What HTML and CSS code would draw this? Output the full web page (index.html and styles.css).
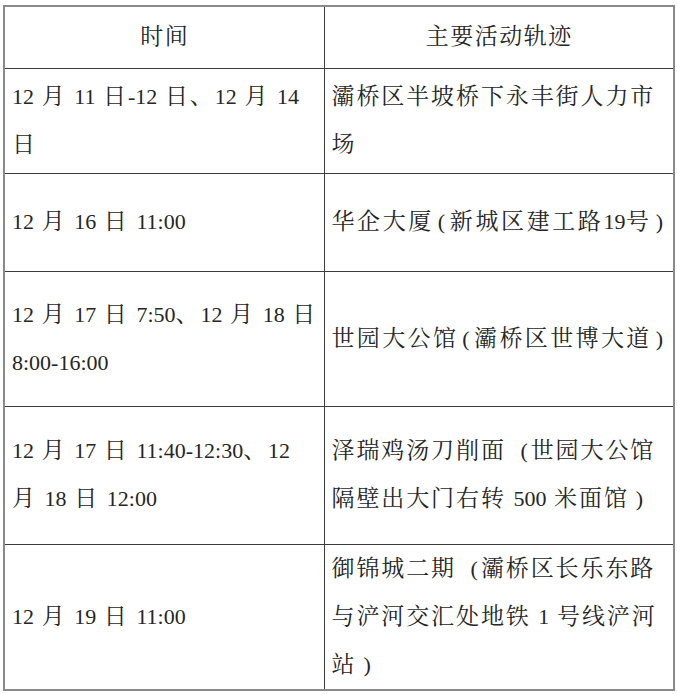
FILE: index.html
```html
<!DOCTYPE html>
<html lang="zh-CN">
<head>
<meta charset="utf-8">
<title>活动轨迹</title>
<link rel="stylesheet" href="styles.css">
</head>
<body>
<table class="track">
  <colgroup><col class="c-time"><col class="c-place"></colgroup>
  <tr class="r-head">
    <th>时间</th>
    <th>主要活动轨迹</th>
  </tr>
  <tr class="r1">
    <td><span class="n">12</span> 月 <span class="n">11</span> 日<span class="n">-12</span> 日、<span class="n">12</span> 月 <span class="n">14</span><br>日</td>
    <td>灞桥区半坡桥下永丰街人力市<br>场</td>
  </tr>
  <tr class="r2">
    <td><span class="n">12</span> 月 <span class="n">16</span> 日 <span class="n">11:00</span></td>
    <td class="fill">华企大厦<span class="p">(</span>新城区建工路<span class="n">19</span>号<span class="p">)</span></td>
  </tr>
  <tr class="r3">
    <td><span class="n">12</span> 月 <span class="n">17</span> 日 <span class="n">7:50</span>、<span class="n">12</span> 月 <span class="n">18</span> 日<br><span class="n">8:00-16:00</span></td>
    <td class="fill">世园大公馆<span class="p">(</span>灞桥区世博大道<span class="p">)</span></td>
  </tr>
  <tr class="r4">
    <td><span class="n">12</span> 月 <span class="n">17</span> 日 <span class="n">11:40-12:30</span>、<span class="n">12</span><br>月 <span class="n">18</span> 日 <span class="n">12:00</span></td>
    <td>泽瑞鸡汤刀削面<span class="fo">(</span>世园大公馆<br>隔壁出大门右转 <span class="n">500</span> 米面馆<span class="fc">)</span></td>
  </tr>
  <tr class="r5">
    <td><span class="n">12</span> 月 <span class="n">19</span> 日 <span class="n">11:00</span></td>
    <td>御锦城二期<span class="fo">(</span>灞桥区长乐东路<br>与浐河交汇处地铁 <span class="n">1</span> 号线浐河<br>站<span class="fc">)</span></td>
  </tr>
</table>
</body>
</html>
```
FILE: styles.css
```css
html, body {
  margin: 0;
  padding: 0;
  background: #ffffff;
}

body {
  padding: 5px 0 0 3px;
  font-family: "Liberation Serif", "Noto Serif CJK SC", "Noto Sans CJK SC", serif;
  color: #262626;
}

.track {
  border-collapse: collapse;
  width: 670px;
  table-layout: fixed;
  border: 2px solid #8a8a8a;
  font-size: 23px;
  letter-spacing: 1.9px;
  line-height: 48px;
}

.c-time { width: 320px; }
.c-place { width: 350px; }

.track th,
.track td {
  border: 1px solid #3c3c3c;
  padding: 0 6px 0 7px;
  vertical-align: middle;
  text-align: left;
  white-space: nowrap;
  font-weight: normal;
}

.track th {
  text-align: center;
  letter-spacing: 1.5px;
}

.track tr > :first-child { border-left: 2px solid #8a8a8a; }
.track tr > :last-child { border-right: 2px solid #8a8a8a; }
.r-head > * { border-top: 2px solid #8a8a8a; }
.r5 > * { border-bottom: 2px solid #8a8a8a; }

.r-head { height: 62px; }
.r1 { height: 105px; }
.r2 { height: 98px; }
.r3 { height: 135px; }
.r4 { height: 138px; }
.r5 { height: 145px; }

.n {
  font-family: "Liberation Serif", serif;
  font-size: 22px;
  letter-spacing: 0;
}

.p {
  font-family: "Liberation Serif", serif;
  font-size: 22px;
  letter-spacing: 0;
  padding: 0 4px;
}

.fo,
.fc {
  display: inline-block;
  width: 24.9px;
  font-family: "Liberation Serif", serif;
  font-size: 22px;
  letter-spacing: 0;
  box-sizing: border-box;
}

.fo {
  text-align: right;
  padding-right: 3px;
}

.fc {
  text-align: left;
  padding-left: 7px;
}

.fill {
  text-align: justify;
  text-align-last: justify;
}
```
